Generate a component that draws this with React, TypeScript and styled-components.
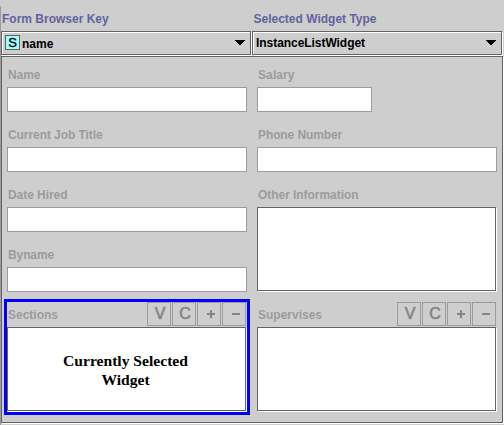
import React from "react";
import styled, { createGlobalStyle } from "styled-components";

const face = "#cecece";
const mid = "#9c9c9c";
const dark = "#636363";

const GlobalStyle = createGlobalStyle`
  * { box-sizing: border-box; }
  body { margin: 0; background: ${face}; overflow: hidden; }
`;

const Page = styled.main`
  width: 504px;
  height: 425px;
  display: flex;
  flex-direction: column;
  background: ${face};
  padding-top: 6px;
  font: bold 12px/14px "Liberation Sans", Arial, sans-serif;
`;

const Frame = styled.div`
  flex: 1;
  border-left: 1px solid ${mid};
`;

const Header = styled.header`
  display: grid;
  grid-template-columns: 251px 251px;
`;

const Text = styled.span<{ $spacing?: number }>`
  white-space: nowrap;
  letter-spacing: ${(p) => p.$spacing ?? 0}px;
`;

const Caption = styled(Text)<{ $indent?: number }>`
  display: block;
  height: 25px;
  padding: 6px 0 0 ${(p) => p.$indent ?? 1}px;
  color: #63639c;
`;

const Combo = styled.div<{ $lift?: boolean }>`
  width: 250px;
  height: 24px;
  display: flex;
  align-items: center;
  gap: 2px;
  padding: ${(p) => (p.$lift ? "0 5px 1px 3px" : "1px 5px 0 3px")};
  border: 1px solid ${dark};
  box-shadow: inset 1px 1px 0 #fff, 1px 1px 0 #fff;
  color: #000;
`;

const SlotBadge = styled.span`
  width: 15px;
  height: 15px;
  margin-top: -2px;
  border: 1px solid ${dark};
  background: #9cffff;
  text-align: center;
  font: 13px/14px "Liberation Sans", Arial, sans-serif;
  -webkit-text-stroke: 0.3px #000;
`;

const Arrow = styled.svg<{ $rise: number }>`
  width: 10px;
  height: 5px;
  margin: 0 0 ${(p) => p.$rise}px auto;
`;

const Panel = styled.section`
  width: 502px;
  height: 367px;
  display: grid;
  grid-template-columns: 240px 240px;
  column-gap: 10px;
  margin-top: 1px;
  padding: 8px 0 0 5px;
  border: 1px solid ${dark};
  box-shadow: 1px 1px 0 #fff;
`;

const Column = styled.div`
  display: flex;
  flex-direction: column;
`;

const Field = styled.div`
  height: 60px;
`;

const AreaField = styled.div`
  height: 120px;
`;

const FieldLabel = styled(Text)`
  display: block;
  height: 22px;
  padding: 3px 0 0 1px;
  color: ${mid};
`;

const Input = styled.div<{ $width?: number }>`
  width: ${(p) => p.$width ?? 240}px;
  height: 25px;
  border: 1px solid ${mid};
  background: #fff;
`;

const Area = styled.div`
  width: 239px;
  height: 84px;
  display: flex;
  align-items: center;
  justify-content: center;
  padding: 2px 2px 0 0;
  border: 1px solid ${dark};
  box-shadow: 1px 1px 0 #fff;
  background: #fff;
  color: #000;
  text-align: center;
  font: bold 15.6px/19px "Liberation Serif", "Times New Roman", serif;
`;

const ListField = styled.div<{ $selected?: boolean }>`
  width: 240px;
  height: 110px;
  margin-top: -3px;
  outline: ${(p) => (p.$selected ? "3px solid #0000ff" : "none")};
`;

const ListHeader = styled.div`
  display: flex;
  justify-content: space-between;
  height: 25px;
  padding: 0 1px 0 0;
`;

const ListLabel = styled(Text)`
  padding: 6px 0 0 1px;
  color: ${mid};
`;

const Buttons = styled.div`
  display: flex;
  gap: 1px;
`;

const ToolButton = styled.button`
  width: 24px;
  height: 24px;
  display: flex;
  align-items: center;
  justify-content: center;
  padding: 0 0 0 2px;
  border: 1px solid ${mid};
  background: ${face};
  color: #848484;
  font: 16px/22px "Liberation Sans", Arial, sans-serif;
  -webkit-text-stroke: 0.6px #848484;
`;

const SignIcon = styled.svg`
  width: 8px;
  height: 8px;
  margin-left: 2px;
  fill: #848484;
`;

function DownArrow({ rise = 0 }: { rise?: number }) {
  return (
    <Arrow $rise={rise} viewBox="0 0 10 5" shapeRendering="crispEdges">
      <path d="M0 0H10V1H9V2H8V3H7V4H6V5H4V4H3V3H2V2H1V1H0Z" />
    </Arrow>
  );
}

function Sign({ plus }: { plus?: boolean }) {
  return (
    <SignIcon viewBox="0 0 8 8" shapeRendering="crispEdges">
      <path d={plus ? "M0 3H3V0H5V3H8V5H5V8H3V5H0Z" : "M0 3H8V5H0Z"} />
    </SignIcon>
  );
}

function ListWidget({ label, selected, children }: {
  label: string; selected?: boolean; children?: React.ReactNode;
}) {
  return (
    <ListField $selected={selected}>
      <ListHeader>
        <ListLabel>{label}</ListLabel>
        <Buttons>
          <ToolButton aria-label="View">V</ToolButton>
          <ToolButton aria-label="Create">C</ToolButton>
          <ToolButton aria-label="Add"><Sign plus /></ToolButton>
          <ToolButton aria-label="Remove"><Sign /></ToolButton>
        </Buttons>
      </ListHeader>
      <Area>{children}</Area>
    </ListField>
  );
}

function TextField({ label, spacing, width }: { label: string; spacing?: number; width?: number }) {
  return (
    <Field>
      <FieldLabel $spacing={spacing}>{label}</FieldLabel>
      <Input $width={width} />
    </Field>
  );
}

export default function App() {
  return (
    <>
      <GlobalStyle />
      <Page>
        <Frame>
          <Header>
            <div>
              <Caption>Form Browser Key</Caption>
              <Combo>
                <SlotBadge>S</SlotBadge>
                <Text>name</Text>
                <DownArrow rise={2} />
              </Combo>
            </div>
            <div>
              <Caption $indent={1.5}>Selected Widget Type</Caption>
              <Combo $lift>
                <Text $spacing={-0.05}>InstanceListWidget</Text>
                <DownArrow />
              </Combo>
            </div>
          </Header>
          <Panel>
            <Column>
              <TextField label="Name" spacing={-0.1} />
              <TextField label="Current Job Title" spacing={-0.07} />
              <TextField label="Date Hired" spacing={-0.05} />
              <TextField label="Byname" spacing={-0.1} />
              <ListWidget label="Sections" selected>
                Currently Selected<br />Widget
              </ListWidget>
            </Column>
            <Column>
              <TextField label="Salary" spacing={0.1} width={115} />
              <TextField label="Phone Number" spacing={-0.1} />
              <AreaField>
                <FieldLabel $spacing={-0.05}>Other Information</FieldLabel>
                <Area />
              </AreaField>
              <ListWidget label="Supervises" />
            </Column>
          </Panel>
        </Frame>
      </Page>
    </>
  );
}
